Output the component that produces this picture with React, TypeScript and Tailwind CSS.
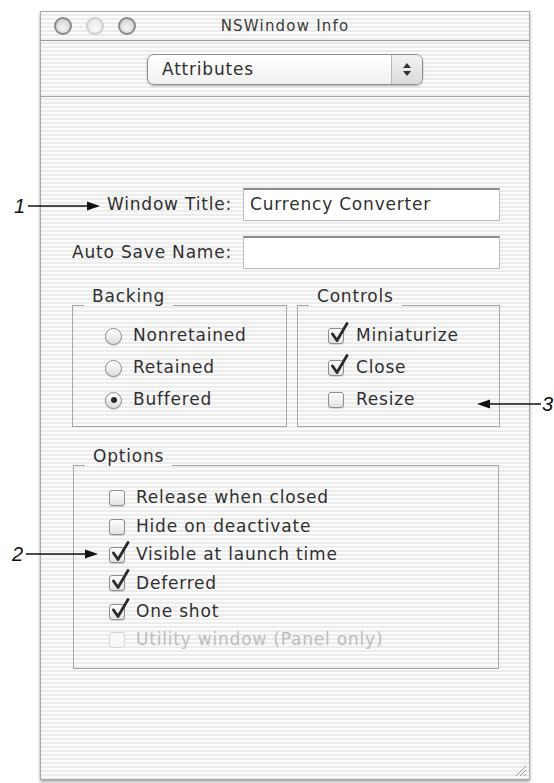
import React from 'react'

const ui = { fontFamily: '"DejaVu Sans", "Lucida Grande", Verdana, sans-serif' }
const callout = { fontFamily: '"Liberation Sans Narrow", "Liberation Sans", sans-serif' }

const Checkmark = () => (
  <svg className="absolute -top-[7px] left-[1px]" width="19" height="22" viewBox="0 0 19 22">
    <path d="M2.5 12 L7 18.5 L17 1.5" fill="none" stroke="#2b2b2b" strokeWidth="2.8" strokeLinecap="round" strokeLinejoin="round" />
  </svg>
)

const Checkbox = ({ checked, disabled }: { checked?: boolean; disabled?: boolean }) => (
  <span
    className={
      disabled
        ? 'relative inline-block h-[16px] w-[16px] shrink-0 rounded-[3px] border border-[#d6d6d6] bg-[#f7f7f7]'
        : 'relative inline-block h-[16px] w-[16px] shrink-0 rounded-[3px] border border-[#8e8e8e] bg-[linear-gradient(#fdfdfd,#e2e2e2)] shadow-[0_1px_1px_rgba(0,0,0,0.15)]'
    }
  >
    {checked && <Checkmark />}
  </span>
)

const Radio = ({ on }: { on?: boolean }) => (
  <span className="flex h-[17px] w-[17px] shrink-0 items-center justify-center rounded-full border border-[#8a8a8a] bg-[linear-gradient(#fefefe,#dedede)] shadow-[0_1px_1px_rgba(0,0,0,0.15)]">
    {on && <span className="h-[6px] w-[6px] rounded-full bg-[#2b2b2b]" />}
  </span>
)

const Row = ({ children, label, muted }: { children: React.ReactNode; label: string; muted?: boolean }) => (
  <div className="flex h-[28.4px] items-center gap-[11px]">
    {children}
    <span className={muted ? 'text-[#bdbdbd]' : ''}>{label}</span>
  </div>
)

const Legend = ({ children }: { children: React.ReactNode }) => (
  <legend className="ml-[11px] px-[8px] pb-[18px] leading-[18px]">{children}</legend>
)

const Arrow = ({ flip, w = 72 }: { flip?: boolean; w?: number }) => (
  <svg width={w} height="10" viewBox={`0 0 ${w} 10`} className={flip ? 'rotate-180' : ''}>
    <line x1="0" y1="5" x2={w - 10} y2="5" stroke="#111" strokeWidth="1.3" />
    <polygon points={`${w},5 ${w - 13},0.5 ${w - 13},9.5`} fill="#111" />
  </svg>
)

export default function App() {
  const stripes = 'bg-[image:repeating-linear-gradient(to_bottom,#fbfbfb_0px,#fbfbfb_2px,#ececec_2px,#ececec_4px)]'
  return (
    <div className="relative h-[783px] w-[554px] overflow-hidden bg-white text-[17px] tracking-[0.8px] text-[#303030]" style={ui}>
      <div className={`relative ml-[40px] mt-[11px] flex h-[769px] w-[490px] flex-col border border-[#a9a9a9] shadow-[0_2px_3px_rgba(0,0,0,0.35)] ${stripes}`}>
        {/* title bar */}
        <div className="relative flex h-[29px] items-center border-b border-[#9a9a9a]">
          <div className="ml-[13px] flex gap-[14px]">
            <span className="h-[18px] w-[18px] rounded-full border-2 border-[#8a8a8a] bg-[radial-gradient(circle_at_50%_65%,#f4f4f4,#c9c9c9)]" />
            <span className="h-[18px] w-[18px] rounded-full border-2 border-[#cfcfcf] bg-[radial-gradient(circle_at_50%_65%,#fafafa,#e3e3e3)]" />
            <span className="h-[18px] w-[18px] rounded-full border-2 border-[#8a8a8a] bg-[radial-gradient(circle_at_50%_65%,#f4f4f4,#c9c9c9)]" />
          </div>
          <span className="absolute inset-x-0 text-center text-[15px] tracking-[1.2px] text-[#3a3a3a]">NSWindow Info</span>
        </div>

        {/* toolbar */}
        <div className="flex h-[56px] justify-center border-b border-[#a4a4a4] pt-[13px]">
          <div className="flex h-[31px] w-[276px] overflow-hidden rounded-[7px] border border-[#8f8f8f] bg-[linear-gradient(#ffffff,#f1f1f1)] shadow-[0_1px_2px_rgba(0,0,0,0.3)]">
            <span className="flex flex-1 items-center pl-[14px]">Attributes</span>
            <span className="flex w-[31px] flex-col items-center justify-center gap-[3px] border-l border-[#b8b8b8] bg-[linear-gradient(#f3f3f3,#dadada)]">
              <svg width="8" height="5" viewBox="0 0 8 5"><polygon points="4,0 8,5 0,5" fill="#333" /></svg>
              <svg width="8" height="5" viewBox="0 0 8 5"><polygon points="0,0 8,0 4,5" fill="#333" /></svg>
            </span>
          </div>
        </div>

        {/* content */}
        <div className="flex flex-1 flex-col pl-[31px] pr-[29px] pt-[91px]">
          <div className="grid grid-cols-[160px_1fr] items-center gap-x-[11px] gap-y-[15px]">
            <span className="text-right">Window Title:</span>
            <div className="flex h-[33px] items-center border border-[#bcbcbc] border-t-2 border-t-[#8c8c8c] bg-white pl-[6px]">Currency Converter</div>
            <span className="text-right">Auto Save Name:</span>
            <div className="h-[33px] border border-[#bcbcbc] border-t-2 border-t-[#8c8c8c] bg-white" />
          </div>

          <div className="mt-[18px] grid grid-cols-[215px_1fr] gap-x-[10px]">
            <fieldset className="border border-[#a6a6a6] pb-[14px]">
              <Legend>Backing</Legend>
              <div className="flex flex-col gap-[8px] pl-[32px] pt-[1px]">
                {[['Nonretained', false], ['Retained', false], ['Buffered', true]].map(([l, on]) => (
                  <div key={l as string} className="flex h-[24px] items-center gap-[11px]">
                    <Radio on={on as boolean} />
                    <span>{l}</span>
                  </div>
                ))}
              </div>
            </fieldset>
            <fieldset className="border border-[#a6a6a6] pb-[14px]">
              <Legend>Controls</Legend>
              <div className="flex flex-col gap-[8px] pl-[30px] pt-[1px]">
                {[['Miniaturize', true], ['Close', true], ['Resize', false]].map(([l, on]) => (
                  <div key={l as string} className="flex h-[24px] items-center gap-[12px]">
                    <Checkbox checked={on as boolean} />
                    <span>{l}</span>
                  </div>
                ))}
              </div>
            </fieldset>
          </div>

          <fieldset className="ml-[1px] mr-[1px] mt-[20px] border border-[#a6a6a6] pb-[14px]">
            <Legend>Options</Legend>
            <div className="flex flex-col pl-[35px] pt-[1px]">
              <Row label="Release when closed"><Checkbox /></Row>
              <Row label="Hide on deactivate"><Checkbox /></Row>
              <Row label="Visible at launch time"><Checkbox checked /></Row>
              <Row label="Deferred"><Checkbox checked /></Row>
              <Row label="One shot"><Checkbox checked /></Row>
              <Row label="Utility window (Panel only)" muted><Checkbox disabled /></Row>
            </div>
          </fieldset>
        </div>

        {/* resize grip */}
        <svg className="absolute bottom-[2px] right-[2px]" width="14" height="14" viewBox="0 0 14 14">
          <path d="M13 3 L3 13 M13 7 L7 13 M13 11 L11 13" stroke="#9a9a9a" strokeWidth="1" />
        </svg>
      </div>

      {/* callouts */}
      <div className="absolute left-[14px] top-[194px] flex items-center gap-[3px]">
        <span className="text-[20px] italic leading-[24px] tracking-normal text-[#111]" style={callout}>1</span>
        <Arrow />
      </div>
      <div className="absolute left-[12px] top-[542px] flex items-center gap-[3px]">
        <span className="text-[20px] italic leading-[24px] tracking-normal text-[#111]" style={callout}>2</span>
        <Arrow />
      </div>
      <div className="absolute left-[477px] top-[392px] flex items-center gap-[1px]">
        <Arrow flip w={64} />
        <span className="text-[20px] italic leading-[24px] tracking-normal text-[#111]" style={callout}>3</span>
      </div>
    </div>
  )
}
